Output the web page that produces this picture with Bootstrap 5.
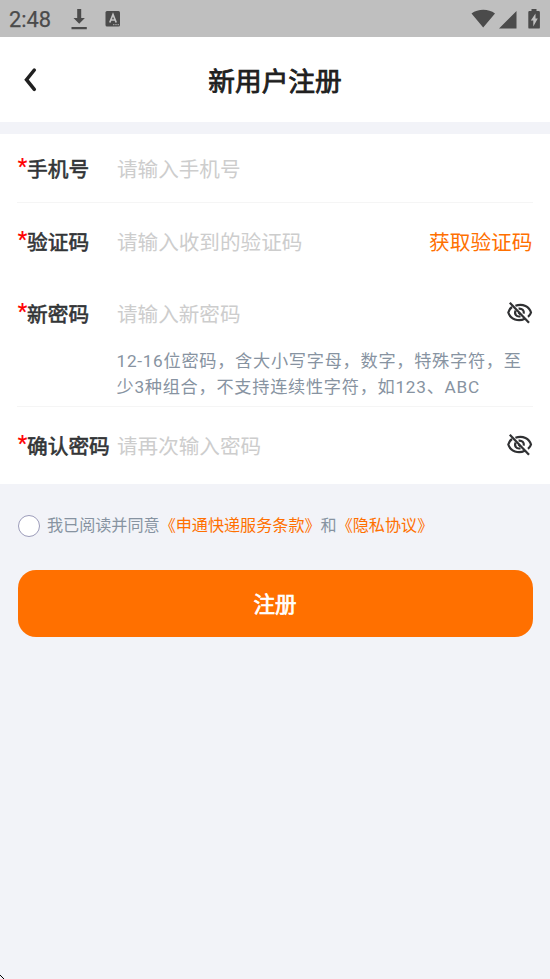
<!DOCTYPE html>
<html lang="zh-CN">
<head>
<meta charset="utf-8">
<meta name="viewport" content="width=device-width, initial-scale=1">
<title>新用户注册</title>
<link href="https://cdn.jsdelivr.net/npm/bootstrap@5.3.0/dist/css/bootstrap.min.css" rel="stylesheet">
<style>
body{font-family:Roboto,"Noto Sans CJK SC",sans-serif;background:#f2f3f8;color:#323436;min-height:979px;overflow:hidden}
.statusbar{height:37px;background:#bfbfbf;color:#4b4b4b;padding:0 9px 0 9px}
.clock{font-size:21.8px;line-height:35px;padding-top:2px;width:61px;-webkit-text-stroke:.25px}
.titlebar{height:85px;padding:0 23px}
.titlebar h1{font-size:26.7px;font-weight:400;-webkit-text-stroke:.8px;color:#202020;line-height:40px;padding-top:5px}
.side{width:20px}
.form-panel{margin-top:12px;padding:0 17px;height:350px}
.field{font-size:20.7px;line-height:30px}
.field-phone{height:69px}
.field-code{height:78px}
.field-new{height:65px}
.field-confirm{height:77px}
.rule{border-bottom:1px solid #f5f5f5}
.name{width:100px;-webkit-text-stroke:.6px;white-space:nowrap;padding-top:3px}
.field-phone .name,.field-phone input{padding-top:4px!important}
.field-code .name,.field-code input,.field-code .fetch{padding-top:1px}
.star{color:#f00;-webkit-text-stroke:.2px;display:inline-block;width:10px;padding-left:.8px;font-size:22px;line-height:16px;vertical-align:3px}
.field input{color:#323436;min-width:0;font-size:20.6px;line-height:30px;outline:0;padding:3px 0 0}
.field.field-code input{padding-top:1px}
.field input::placeholder{color:#cdcdcd;opacity:1}
.hot{color:#ff7000}
.fetch{padding:1px .5px 0 0}
.field svg{margin:0 0 2px 0}
.hint{height:61px;padding:2px 0 0 99.500px;font-size:17.2px;letter-spacing:.72px;line-height:26px;color:#8793a1;white-space:nowrap}
.agree{height:84px;padding-left:17.500px;font-size:16.1px;color:#8793a1;white-space:nowrap}
.agree label{padding-top:1px}
.ring{width:22px;height:22px;margin:0 7.500px 1px 0;border:1.300px solid #9c9cba;border-radius:50%;background:#fff;appearance:none}
.submit{height:67px;margin:2px 17.500px 0 17.500px;border-radius:18px;background:#ff7000;font-size:21.5px;font-weight:400;-webkit-text-stroke:.7px;color:#fff;padding-top:10px}
.submit:hover{background:#f56b00;color:#fff}
.cursor{position:fixed;left:0;bottom:0}
</style>
</head>
<body>
<header class="statusbar d-flex align-items-center">
  <span class="clock">2:48</span>
  <svg width="18" height="22" viewBox="0 0 18 22" fill="#4b4b4b"><path d="M7.2 1h4v9h3.700L9.200 15.800 3.500 10h3.700zM1.500 19h15.300v2.200H1.500z"/></svg>
  <svg class="ms-3" width="18" height="18" viewBox="0 0 18 18"><rect x="1.500" y="1" width="14.500" height="15.500" rx="1.500" fill="#4b4b4b"/><path d="M5.800 12.500 9 4.500l3.200 8M6.800 10h4.400" fill="none" stroke="#c4c4c4" stroke-width="1.700"/><path d="M9.200 14.700h1.200m1 0h1.200m1 0h1.200" stroke="#c4c4c4"/></svg>
  <svg class="ms-auto" width="70" height="24" viewBox="0 0 70 24" fill="#4b4b4b"><path d="M.5 6.500C7 1.600 17.500 1.600 24 6.500L12.200 20.500zM28 21.500 45.500 4v17.500z"/><path d="M60.500 2h5v2h2.200q1.200 0 1.200 1.200v15.200q0 1.200-1.200 1.200h-9.200q-1.200 0-1.200-1.200V5.200Q57.300 4 58.500 4h2z"/><path d="M64.500 6.500v5h2.300l-4.500 8v-6h-2.500z" fill="#bfbfbf"/></svg>
</header>
<nav class="titlebar bg-white d-flex align-items-center justify-content-between">
  <svg class="side" height="26" viewBox="0 0 20 26" fill="none" stroke="#202020" stroke-width="3.500" stroke-linecap="round"><path d="M11.300 3 3.500 12.700l7.800 9.600"/></svg>
  <h1 class="mb-0">新用户注册</h1>
  <span class="side"></span>
</nav>
<form>
  <section class="form-panel bg-white">
    <div class="field field-phone rule d-flex align-items-center">
      <label class="name" for="phone"><span class="star">*</span>手机号</label>
      <input id="phone" class="border-0 bg-transparent flex-grow-1" type="text" placeholder="请输入手机号">
    </div>
    <div class="field field-code d-flex align-items-center">
      <label class="name" for="code"><span class="star">*</span>验证码</label>
      <input id="code" class="border-0 bg-transparent flex-grow-1" type="text" placeholder="请输入收到的验证码">
      <span class="hot fetch">获取验证码</span>
    </div>
    <div class="field field-new d-flex align-items-center">
      <label class="name" for="pw"><span class="star">*</span>新密码</label>
      <input id="pw" class="border-0 bg-transparent flex-grow-1" type="password" placeholder="请输入新密码">
      <svg width="27" height="24" viewBox="0 0 27 24" fill="none" stroke="#303133" stroke-width="2.200"><path d="M9.400 4.800C17 2 23.500 6 25 11.500c-.5 1.800-1.600 3.200-3 4.300M6 6Q3.200 8 2.300 11.500C4.400 18.500 12.500 21 18.800 17.800"/><path d="M12.600 7.600c3.500-.4 5.700 2 5.200 5M9.700 9.600c-1.800 3.400.7 6.700 4.800 5.700M12.500 11.500l2 2"/><path d="m3.800 1.800 19.200 20"/></svg>
    </div>
    <div class="hint rule">12-16位密码，含大小写字母，数字，特殊字符，至<br>少3种组合，不支持连续性字符，如123、ABC</div>
    <div class="field field-confirm d-flex align-items-center">
      <label class="name" for="pw2"><span class="star">*</span>确认密码</label>
      <input id="pw2" class="border-0 bg-transparent flex-grow-1" type="password" placeholder="请再次输入密码">
      <svg width="27" height="24" viewBox="0 0 27 24" fill="none" stroke="#303133" stroke-width="2.200"><path d="M9.400 4.800C17 2 23.500 6 25 11.500c-.5 1.800-1.600 3.200-3 4.300M6 6Q3.200 8 2.300 11.500C4.400 18.500 12.500 21 18.800 17.800"/><path d="M12.600 7.600c3.500-.4 5.700 2 5.200 5M9.700 9.600c-1.800 3.400.7 6.700 4.800 5.700M12.500 11.500l2 2"/><path d="m3.800 1.800 19.200 20"/></svg>
    </div>
  </section>
  <div class="agree d-flex align-items-center">
    <input class="ring" type="checkbox" id="agree" aria-label="同意">
    <label for="agree">我已阅读并同意<span class="hot">《申通快递服务条款》</span>和<span class="hot">《隐私协议》</span></label>
  </div>
  <div class="d-grid"><button class="submit btn border-0" type="button">注册</button></div>
</form>
<svg class="cursor" width="4" height="4" viewBox="0 0 4 4"><path d="M0 0h1v1H0zM1 1h1v1H1zM2 2h1v1H2zM3 3h1v1H3z"/></svg>
<script src="https://cdn.jsdelivr.net/npm/bootstrap@5.3.0/dist/js/bootstrap.bundle.min.js"></script>
</body>
</html>
